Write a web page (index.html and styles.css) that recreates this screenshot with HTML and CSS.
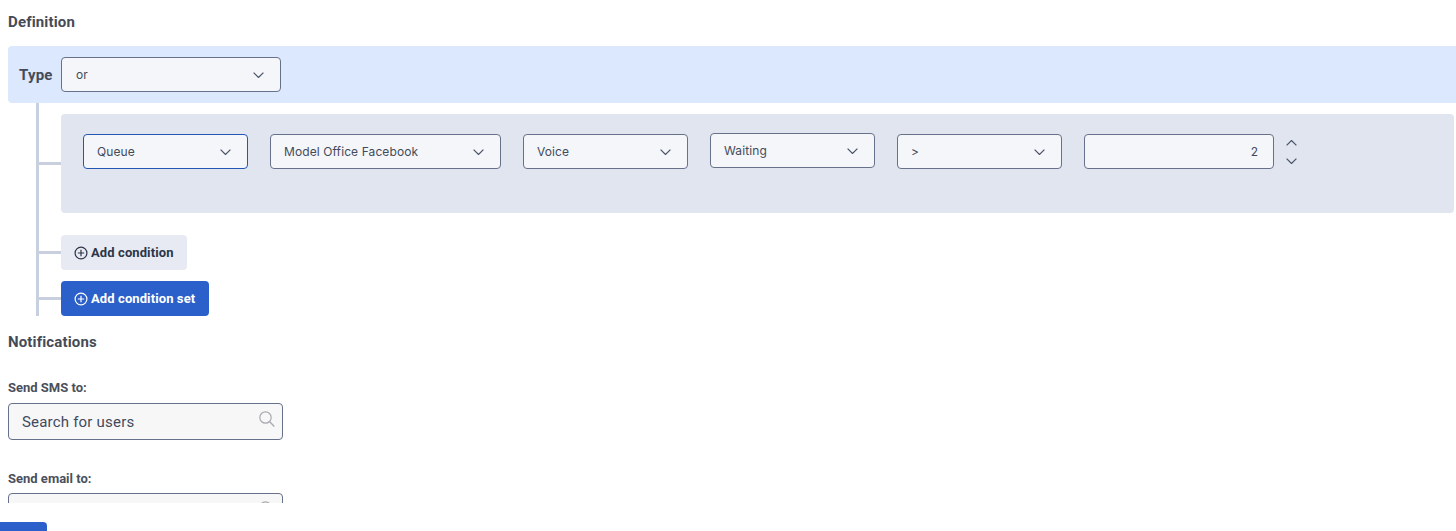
FILE: index.html
```html
<!DOCTYPE html>
<html lang="en">
<head>
<meta charset="utf-8">
<title>Definition</title>
<link rel="stylesheet" href="styles.css">
</head>
<body>
<svg class="defs" width="0" height="0" aria-hidden="true">
  <symbol id="chev" viewBox="0 0 11 6"><path d="M.6.6l4.9 4.9L10.400.6" fill="none" stroke="currentColor" stroke-width="1.2"/></symbol>
  <symbol id="plus" viewBox="0 0 14 14"><circle cx="7" cy="7" r="5.9" fill="none" stroke="currentColor" stroke-width="1.2"/><path d="M7 3.8v6.4M3.8 7h6.4" fill="none" stroke="currentColor" stroke-width="1.2"/></symbol>
  <symbol id="search" viewBox="0 0 16 16"><circle cx="6.5" cy="6.500" r="5.7" fill="none" stroke="currentColor" stroke-width="1.2"/><path d="M10.700 10.700l4.600 4.800" fill="none" stroke="currentColor" stroke-width="1.4"/></symbol>
</svg>
<main class="page">
  <h2 class="heading def-heading">Definition</h2>
  <div class="type-bar">
    <span class="type-label">Type</span>
    <div class="select w-type"><span>or</span><svg class="chev"><use href="#chev"/></svg></div>
  </div>
  <div class="tree">
    <div class="card branch">
      <div class="select w-s focus"><span>Queue</span><svg class="chev"><use href="#chev"/></svg></div>
      <div class="select w-l"><span>Model Office Facebook</span><svg class="chev"><use href="#chev"/></svg></div>
      <div class="select w-s"><span>Voice</span><svg class="chev"><use href="#chev"/></svg></div>
      <div class="select w-s raised"><span>Waiting</span><svg class="chev"><use href="#chev"/></svg></div>
      <div class="select w-s"><span>&gt;</span><svg class="chev"><use href="#chev"/></svg></div>
      <div class="number-wrap">
        <div class="number">2</div>
        <div class="spinner">
          <svg class="chev up"><use href="#chev"/></svg>
          <svg class="chev"><use href="#chev"/></svg>
        </div>
      </div>
    </div>
    <div class="branch btn-row first"><button class="btn light"><svg class="plus"><use href="#plus"/></svg>Add condition</button></div>
    <div class="branch btn-row second"><button class="btn primary"><svg class="plus"><use href="#plus"/></svg>Add condition set</button></div>
  </div>
  <h2 class="heading note-heading">Notifications</h2>
  <label class="field-label sms-label">Send SMS to:</label>
  <div class="search"><span>Search for users</span><svg class="search-icon"><use href="#search"/></svg></div>
  <label class="field-label email-label">Send email to:</label>
  <div class="search email-search"><span>Search for users</span><svg class="search-icon"><use href="#search"/></svg></div>
</main>
<footer class="footer"><button class="save">Save</button></footer>
</body>
</html>
```
FILE: styles.css
```css
* { box-sizing: border-box; }
html, body { margin: 0; height: 531px; overflow: hidden; background: #fff; }
body { font-family: Roboto, "Liberation Sans", sans-serif; color: #3f4756; }
.defs { position: absolute; }
.page { height: 503px; overflow: hidden; padding-left: 8px; }
.heading { margin: 0; font-size: 15px; line-height: 20px; font-weight: 700; letter-spacing: .15px; color: #454b56; }
.def-heading { padding-top: 12px; height: 46px; }
.type-bar { display: flex; align-items: center; height: 57px; padding-left: 11px; gap: 9px; background: #dce8fe; border-radius: 4px 0 0 4px; }
.type-label { width: 33px; font-size: 15px; font-weight: 700; letter-spacing: .2px; white-space: nowrap; color: #454b56; }
.select { display: flex; align-items: center; justify-content: space-between; flex: none; height: 35px; padding: 0 16px 0 13px; background: #f4f6f9; border: 1px solid #67718a; border-radius: 4px; font-family: Inter, sans-serif; font-size: 12px; letter-spacing: .1px; color: #434b5b; }
.w-type { width: 220px; padding-left: 14px; }
.w-s { width: 165px; }
.w-l { width: 231px; }
.focus { border-color: #2457b3; }
.raised { margin-top: -1px; }
.chev { width: 11px; height: 6px; color: #4a5366; }
.tree { margin-left: 28px; height: 213px; padding-top: 11px; border-left: 3px solid #c8cfde; }
.branch { position: relative; margin-left: 22px; }
.branch::before { content: ""; position: absolute; left: -22px; width: 22px; height: 3px; background: #c8cfde; }
.card { display: flex; align-items: flex-start; gap: 22px; height: 99px; padding: 20px 22px; width: 1393px; background: #e1e5ef; border-radius: 4px; }
.card::before { top: 48px; }
.btn-row::before { top: 16px; }
.btn-row.first { margin-top: 22px; }
.btn-row.second { margin-top: 11px; }
.btn { display: flex; align-items: center; gap: 3px; height: 35px; padding: 0 13px; border: 0; border-radius: 4px; font-family: Roboto, sans-serif; font-size: 13px; font-weight: 700; letter-spacing: .1px; }
.btn.light { background: #e7eaf2; color: #2c3547; }
.btn.primary { width: 148px; background: #2b5fca; color: #fff; }
.plus { width: 14px; height: 14px; }
.number-wrap { display: flex; align-items: flex-start; gap: 12px; }
.number { width: 190px; height: 35px; line-height: 33px; padding-right: 15px; text-align: right; background: #f4f6f9; border: 1px solid #67718a; border-radius: 4px; font-family: Inter, sans-serif; font-size: 12px; color: #434b5b; }
.spinner { display: flex; flex-direction: column; gap: 12px; padding-top: 6px; }
.spinner .chev { display: block; }
.up { transform: scaleY(-1); }
.note-heading { margin-top: 16px; }
.field-label { display: block; font-size: 13px; line-height: 16px; font-weight: 700; color: #4a505c; }
.sms-label { margin-top: 28px; }
.email-label { margin-top: 31px; }
.search { display: flex; align-items: center; justify-content: space-between; width: 275px; height: 37px; margin-top: 7px; padding: 0 7px 0 13px; background: #f7f7f8; border: 1px solid #67718a; border-radius: 4px; font-size: 15px; letter-spacing: .2px; color: #3f4a5c; }
.email-search { margin-top: 6px; }
.search-icon { width: 16px; height: 16px; color: #a9abb0; margin-top: -5px; }
.footer { padding-top: 19px; }
.save { display: block; width: 47px; height: 36px; border: 0; border-radius: 0 4px 0 0; background: #2b5fca; color: #fff; font-size: 13px; }
```
